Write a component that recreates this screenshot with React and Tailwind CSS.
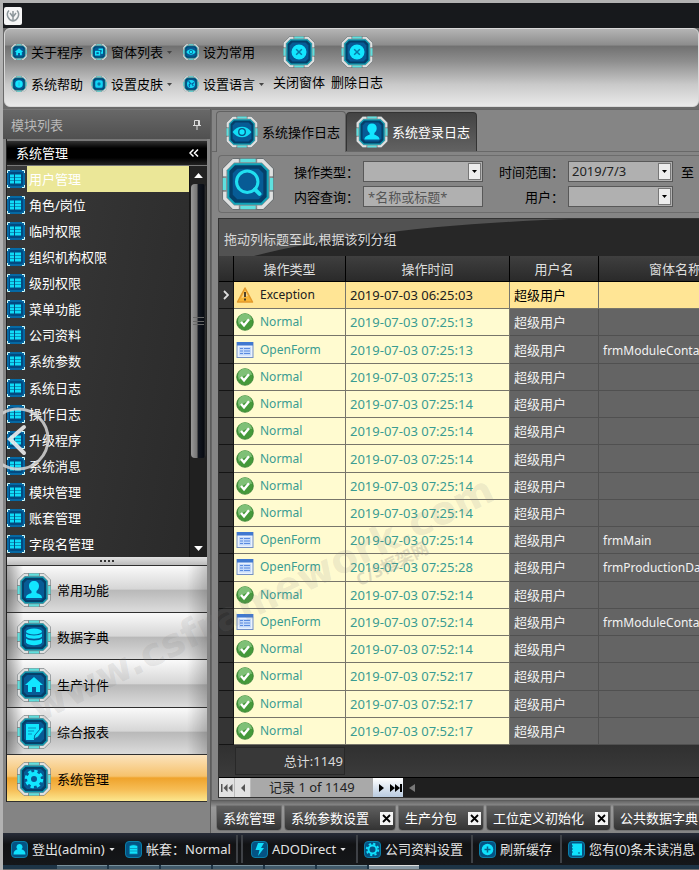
import React from "react";

const glyphs = {
  home: <path d="M17 9 8 17h3v7h4v-5h4v5h4v-7h3z" fill="#12e6ff" />,
  user: (
    <path d="M17 8c3 0 5 2 5 5 0 2-1 4-2.500 5v2c3 1 5.500 2 5.500 5H9c0-3 2.500-4 5.500-5v-2C13 17 12 15 12 13c0-3 2-5 5-5z" fill="#12e6ff" />
  ),
  data: (
    <g fill="#12e6ff">
      <ellipse cx="17" cy="11.500" rx="8" ry="3" />
      <path d="M9 13.500c2 2.500 14 2.500 16 0v3c-2 3-14 3-16 0z" />
      <path d="M9 18.500c2 2.500 14 2.500 16 0v4c-2 3.500-14 3.500-16 0z" />
    </g>
  ),
  report: (
    <g>
      <path d="M9 9h13v6l-5 6v4H9z" fill="#12e6ff" />
      <path d="m25 12-7 8-1 4 4-2 6-8z" fill="#12e6ff" stroke="#0a5f94" strokeWidth=".8" />
      <path d="M11 13h8M11 16h6M11 19h4" stroke="#0a8fc0" />
    </g>
  ),
  gear: (
    <g>
      <circle cx="17" cy="17" r="5" fill="none" stroke="#12e6ff" strokeWidth="4" />
      <circle cx="17" cy="17" r="7.500" fill="none" stroke="#12e6ff" strokeWidth="3.500" strokeDasharray="3.2 2.690" />
    </g>
  ),
  eye: (
    <g>
      <path d="M7 17c5-7.500 15-7.500 20 0-5 7.500-15 7.500-20 0z" fill="#12dcf5" />
      <circle cx="17" cy="17" r="4.200" fill="#075487" />
      <circle cx="17" cy="17" r="2.800" fill="#12e6ff" />
    </g>
  ),
  search: (
    <g fill="none" stroke="#20dff0" strokeLinecap="round">
      <circle cx="16.500" cy="15.500" r="7" strokeWidth="2" />
      <path d="m21.500 20.500 3 3" strokeWidth="2.600" />
    </g>
  ),
  close: (
    <g>
      <circle cx="17" cy="17" r="8" fill="#12e6ff" />
      <path d="m14 14 6 6m0-6-6 6" stroke="#077aa8" strokeWidth="1.600" />
    </g>
  ),
  windows: (
    <g fill="none" stroke="#12e6ff" strokeWidth="3">
      <rect x="10" y="16" width="8" height="7" />
      <path d="M16 11h8v8h-3" />
    </g>
  ),
  info: (
    <g>
      <circle cx="17" cy="17" r="8" fill="#12e6ff" />
      <path d="M17 13v8" stroke="#2cb0d0" strokeWidth="2" />
    </g>
  ),
  skin: (
    <g>
      <rect x="9" y="9" width="16" height="16" rx="4" fill="#12d6f5" />
      <circle cx="17" cy="17" r="3.500" fill="#0877a8" />
    </g>
  ),
  globe: (
    <g>
      <circle cx="17" cy="17" r="8.500" fill="#12d6f5" />
      <path d="m12 11 4 5-3 3 1 4M24 14l-5 3 3 4" stroke="#0560a0" strokeWidth="2.500" fill="none" />
    </g>
  ),
};

function TechIcon({ name, className }) {
  return (
    <svg viewBox="0 0 34 34" className={className} aria-hidden="true">
      <path d="M7 .5h20L33.500 7v20L27 33.500H7L.5 27V7z" fill="#868e91" stroke="#5e6669" strokeWidth=".6" />
      <path d="M11 1.800H7.500L1.800 7.500V12M23 1.800h3.500l5.700 5.700V12M1.800 22v4.500l5.700 5.700H11M32.200 22v4.500l-5.700 5.700H23" stroke="#dfe1e1" strokeWidth="2.200" fill="none" />
      <path d="M12 1.600h10M12 32.400h10M1.600 13v8M32.400 13v8" stroke="#5fe0de" strokeWidth="2.200" />
      <path d="M8 3.500h18L30.500 8v18L26 30.500H8L3.500 26V8z" fill="#0fa3b8" />
      <path d="M8.500 4.800h17l3.700 3.700v17l-3.700 3.700h-17l-3.700-3.700v-17z" fill="#053f69" />
      <path d="M10 7h14l3 3v14l-3 3H10l-3-3V10z" fill="#075b95" />
      {glyphs[name]}
    </svg>
  );
}

function ListIcon() {
  return (
    <svg viewBox="0 0 18 18" className="h-[18px] w-[18px] shrink-0" aria-hidden="true">
      <rect width="18" height="18" fill="#0569a4" />
      <path d="M.5 3V.5H3M15 .5h2.500V3M.5 15v2.500H3M15 17.500h2.500V15" stroke="#d5ffff" fill="none" />
      <rect x="2" y="2" width="14" height="14" rx="2" fill="#034a80" />
      <path d="M3 4.500h4v3H3zm5 0h6v3H8zM3 8h4v2.500H3zm5 0h6v2.500H8zM3 11h4v2.500H3zm5 0h6v2.500H8z" fill="#10dcf8" />
    </svg>
  );
}

const statusGlyphs = {
  user: <path d="M8.500 3a3 3 0 0 1 2 5.300c2.500 1 4 2 4 5.200h-12c0-3.200 1.500-4.200 4-5.200A3 3 0 0 1 8.500 3z" fill="#10e0fc" />,
  db: <path d="M4.500 5c2-1.500 6-1.500 8 0v8h-8zM4.500 7.500h8M4.500 10h8" fill="#10e0fc" stroke="#0783a8" strokeWidth=".7" />,
  bolt: <path d="M7 2h6l-3 5h3l-6 8 1.500-6H4.500z" fill="#10e0fc" />,
  gear: (
    <g fill="none" stroke="#10e0fc">
      <circle cx="8.500" cy="8.500" r="4" strokeWidth="2" />
      <circle cx="8.500" cy="8.500" r="5.700" strokeWidth="2" strokeDasharray="2.200 2.277" />
    </g>
  ),
  plus: (
    <g>
      <circle cx="8.500" cy="8.500" r="5.800" fill="#10e0fc" />
      <path d="M8.500 5.500v6m-3-3h6" stroke="#05628c" strokeWidth="1.500" />
    </g>
  ),
  note: (
    <g>
      <rect x="4" y="2.500" width="10" height="12" fill="#10e0fc" />
      <path d="M3 5h2M3 8h2M3 11h2M10 12h2" stroke="#04507c" />
    </g>
  ),
};

function StatusIcon({ name }) {
  return (
    <svg viewBox="0 0 17 17" className="h-[17px] w-[17px] shrink-0" aria-hidden="true">
      <rect x=".5" y=".5" width="16" height="16" rx="3.500" fill="#045384" stroke="#0a7fa8" />
      {statusGlyphs[name]}
    </svg>
  );
}

function Caret({ className }) {
  return (
    <svg viewBox="0 0 7 4" className={className} aria-hidden="true">
      <path d="M0 0h7L3.500 4z" fill="currentColor" />
    </svg>
  );
}

function RowIcon({ kind }) {
  if (kind === "Exception")
    return (
      <svg viewBox="0 0 18 18" className="h-[18px] w-[18px] shrink-0" aria-hidden="true">
        <path d="M9 2 16.500 16h-15z" fill="#f8b536" stroke="#e39a2c" strokeWidth="1.500" strokeLinejoin="round" />
        <path d="M9 4.500 12 10l-6.500 2z" fill="#fbd789" />
        <path d="M9 6v5m0 1.500v2" stroke="#3d3220" strokeWidth="1.800" />
      </svg>
    );
  if (kind === "OpenForm")
    return (
      <svg viewBox="0 0 18 18" className="h-[18px] w-[18px] shrink-0" aria-hidden="true">
        <rect x="1" y="1.500" width="16" height="15" fill="#e9f1fd" stroke="#7390c4" />
        <rect x="1" y="1" width="16" height="3.500" fill="#3f78d0" />
        <rect x="3" y="6" width="12" height="8.500" fill="#c3d9fa" />
        <path d="M4 7.500h3m1 0h6M4 10h3m1 0h6M4 12.500h3m1 0h6" stroke="#5a8be0" />
      </svg>
    );
  return (
    <svg viewBox="0 0 18 18" className="h-[18px] w-[18px] shrink-0" aria-hidden="true">
      <circle cx="9" cy="9" r="8.300" fill="#45993b" stroke="#347f31" strokeWidth=".8" />
      <path d="M2 8a7 7 0 0 1 14-1C11 6 6 8 3 12z" fill="#7fc077" />
      <path d="m5 9 3 3.300 5-6" fill="none" stroke="#fff" strokeWidth="2.400" />
    </svg>
  );
}

const modules = ["用户管理", "角色/岗位", "临时权限", "组织机构权限", "级别权限", "菜单功能", "公司资料", "系统参数", "系统日志", "操作日志", "升级程序", "系统消息", "模块管理", "账套管理", "字段名管理"];

const groups = [
  ["user", "常用功能"],
  ["data", "数据字典"],
  ["home", "生产计件"],
  ["report", "综合报表"],
  ["gear", "系统管理"],
];

const rows = [
  ["Exception", "2019-07-03 06:25:03", ""],
  ["Normal", "2019-07-03 07:25:13", ""],
  ["OpenForm", "2019-07-03 07:25:13", "frmModuleContainer"],
  ["Normal", "2019-07-03 07:25:13", ""],
  ["Normal", "2019-07-03 07:25:14", ""],
  ["Normal", "2019-07-03 07:25:14", ""],
  ["Normal", "2019-07-03 07:25:14", ""],
  ["Normal", "2019-07-03 07:25:14", ""],
  ["Normal", "2019-07-03 07:25:14", ""],
  ["OpenForm", "2019-07-03 07:25:14", "frmMain"],
  ["OpenForm", "2019-07-03 07:25:28", "frmProductionData"],
  ["Normal", "2019-07-03 07:52:14", ""],
  ["OpenForm", "2019-07-03 07:52:14", "frmModuleContainer"],
  ["Normal", "2019-07-03 07:52:14", ""],
  ["Normal", "2019-07-03 07:52:17", ""],
  ["Normal", "2019-07-03 07:52:17", ""],
  ["Normal", "2019-07-03 07:52:17", ""],
];

function RibbonItem({ icon, text, menu }) {
  return (
    <button className="flex h-8 items-center gap-1 whitespace-nowrap">
      <TechIcon name={icon} className="h-4 w-4 shrink-0" />
      {text}
      {menu && <Caret className="h-[3px] w-[5px] text-[#444]" />}
    </button>
  );
}

function Ribbon() {
  return (
    <header className="ml-px flex h-[79px] overflow-hidden rounded-md border border-[#d8d8d8] bg-[linear-gradient(#b4b4b4_0%,#8c8c8c_21%,#707070_22%,#8e8e8e_42%,#c9c9c9_72%,#eaeaea_100%)] pl-1.5 pt-[7px] text-black">
      <div className="flex w-20 shrink-0 flex-col items-start">
        <RibbonItem icon="home" text="关于程序" />
        <RibbonItem icon="info" text="系统帮助" />
      </div>
      <div className="flex w-[92px] shrink-0 flex-col items-start">
        <RibbonItem icon="windows" text="窗体列表" menu />
        <RibbonItem icon="skin" text="设置皮肤" menu />
      </div>
      <div className="flex w-[87px] shrink-0 flex-col items-start">
        <RibbonItem icon="eye" text="设为常用" />
        <RibbonItem icon="globe" text="设置语言" menu />
      </div>
      <div className="flex shrink-0 items-start">
        {["关闭窗体", "删除日志"].map((t) => (
          <button key={t} className="flex w-[58px] flex-col items-center gap-1 whitespace-nowrap">
            <TechIcon name="close" className="h-8 w-8" />
            <span className="leading-5">{t}</span>
          </button>
        ))}
      </div>
    </header>
  );
}

function Sidebar() {
  return (
    <aside className="flex w-[208px] shrink-0 flex-col border-r border-[#5c5c5c] bg-[#848484]">
      <div className="flex h-[30px] items-center justify-between border-t border-[#777] bg-[linear-gradient(#686868,#505050)] px-2 text-[#b9b9b9]">
        <span>模块列表</span>
        <svg viewBox="0 0 10 12" className="h-3 w-2.5" fill="none" stroke="#dcdcdc" aria-label="固定">
          <path d="M2.500 1.500h5v5h-5zM6.500 1.500v5M1 6.500h8M5 7v4" />
        </svg>
      </div>
      <div className="mx-[3px] flex flex-col border-l border-[#222]">
        <div className="flex h-[27px] items-center justify-between border-b border-t-2 border-[#777] bg-[linear-gradient(#333,#000_30%,#000_70%,#222)] pl-[9px] pr-2 text-white">
          <span>系统管理</span>
          <svg viewBox="0 0 10 8" className="h-2 w-2.5" fill="none" stroke="#fff" strokeWidth="1.500" aria-label="折叠">
            <path d="M4.500.5 1 4l3.500 3.500M9 .5 5.500 4 9 7.500" />
          </svg>
        </div>
        <div className="flex h-[391px] bg-[#2d2d2d]">
          <ul className="flex min-w-0 flex-1 flex-col overflow-hidden bg-[linear-gradient(100deg,#393939,#2a2a2a)]">
            {modules.map((m, i) => (
              <li key={m} className="flex flex-1 items-center gap-0.5 text-white">
                <ListIcon />
                <a href="#" className={i === 0 ? "flex h-full flex-1 items-center bg-[#ebe798] pl-0.5" : "pl-0.5"}>{m}</a>
              </li>
            ))}
          </ul>
          <div className="flex w-[18px] flex-col items-center border-l border-[#151515] bg-[#202020]">
            <button aria-label="向上" className="flex h-[18px] w-full items-center justify-center bg-[#222] text-white">
              <Caret className="h-[5px] w-[9px] rotate-180" />
            </button>
            <div className="flex h-[274px] w-[15px] items-center rounded-sm bg-[linear-gradient(90deg,#999,#777_38%,#555_42%,#111620_50%,#080b12_85%,#333)]">
              <span className="flex h-2 w-full flex-col justify-between px-0.5"><i className="h-px bg-[#666]" /><i className="h-px bg-[#666]" /><i className="h-px bg-[#666]" /></span>
            </div>
            <button aria-label="向下" className="mt-auto flex h-[18px] w-full items-center justify-center text-white">
              <Caret className="h-[5px] w-[9px]" />
            </button>
          </div>
        </div>
        <div className="flex h-2 items-center justify-center gap-0.5 bg-[linear-gradient(#e2e2e2,#bcbcbc)]">
          <i className="h-0.5 w-0.5 bg-[#333]" /><i className="h-0.5 w-0.5 bg-[#333]" /><i className="h-0.5 w-0.5 bg-[#333]" /><i className="h-0.5 w-0.5 bg-[#333]" />
        </div>
        <nav className="flex h-[237px] flex-col">
          {groups.map(([icon, text], i) => (
            <button
              key={text}
              className={
                i === 4
                  ? "flex flex-1 items-center gap-1.5 border-y border-[#303030] bg-[linear-gradient(#fbe3bd,#f6c26c_46%,#efa32c_50%,#f6bd55_75%,#fce78f)] pl-2.5 pt-0.5 text-black"
                  : "flex flex-1 items-center gap-1.5 border-t border-[#303030] bg-[linear-gradient(90deg,#0005,transparent_8%,transparent_90%,#0003),linear-gradient(#fafafa,#d6d6d6_50%,#b9b9b9_53%,#dcdcdc)] pl-2.5 pt-0.5 text-black"
              }
            >
              <TechIcon name={icon} className="h-[34px] w-[34px]" />
              {text}
            </button>
          ))}
        </nav>
      </div>
    </aside>
  );
}

function Combo({ id, value }) {
  return (
    <div className="relative h-[21px]">
      <select id={id} className="block h-full w-full appearance-none border border-[#585858] bg-[#b0b0b0] pl-[3px] leading-[19px] text-[#222]">
        <option>{value}</option>
      </select>
      <span className="pointer-events-none absolute inset-y-0.5 right-0.5 flex w-[13px] items-center justify-center border border-[#777] bg-[#ededed] text-black">
        <Caret className="h-[3px] w-[5px]" />
      </span>
    </div>
  );
}

function Filters() {
  return (
    <form className="ml-1.5 mt-[3px] flex h-[58px] items-center overflow-hidden rounded-l-sm border border-r-0 border-[#6c6c6c] pl-[3px]">
      <button type="button" aria-label="查询" className="mr-5 shrink-0">
        <TechIcon name="search" className="h-[52px] w-[52px]" />
      </button>
      <div className="grid shrink-0 grid-cols-[65px_120px_77px_105px_auto] items-center gap-1 whitespace-nowrap text-black">
        <label htmlFor="type">操作类型：</label>
        <Combo id="type" value="" />
        <label htmlFor="from" className="text-right">时间范围：</label>
        <Combo id="from" value="2019/7/3" />
        <span className="ml-1">至</span>
        <label htmlFor="content">内容查询：</label>
        <input id="content" placeholder="*名称或标题*" className="h-[21px] w-full border border-[#585858] bg-[#b0b0b0] px-1 placeholder:text-[#555]" />
        <label htmlFor="user" className="text-right">用户：</label>
        <Combo id="user" value="" />
      </div>
    </form>
  );
}

function LogTable() {
  const th = "border-b border-r border-black bg-[linear-gradient(#3f3f3f,#2a2a2a)] p-0 font-normal text-[#dedede]";
  return (
    <table className="h-[489px] w-[533px] table-fixed border-separate border-spacing-0">
      <colgroup>
        <col className="w-[15px]" />
        <col className="w-[112px]" />
        <col className="w-[164px]" />
        <col className="w-[89px]" />
        <col className="w-[153px]" />
      </colgroup>
      <thead>
        <tr className="h-[26px]">
          <th className={th} aria-label="行" />
          <th className={th}>操作类型</th>
          <th className={th}>操作时间</th>
          <th className={th}>用户名</th>
          <th className={th}>窗体名称</th>
        </tr>
      </thead>
      <tbody>
        {rows.map(([kind, time, form], i) => {
          const light = i === 0 ? "border-b border-r border-[#77756a] bg-[#ffe595] p-0 text-[#202020]" : "border-b border-r border-[#77756a] bg-[#fffbd0] p-0 text-[#3a9c92]";
          const dark = i === 0 ? "border-b border-r border-[#77756a] bg-[#ffe595] p-0 pl-1 text-black" : "border-b border-r border-[#505050] bg-[#646464] p-0 pl-1 text-[#f2f2f2]";
          return (
            <tr key={i}>
              <td className="border-b border-r border-[#141414] bg-[#343434] p-0">
                {i === 0 && (
                  <svg viewBox="0 0 6 10" className="mx-auto h-2.5 w-1.5" fill="none" stroke="#ddd" strokeWidth="1.800" aria-label="当前行">
                    <path d="m1 1 4 4-4 4" />
                  </svg>
                )}
              </td>
              <td className={light}>
                <div className="flex items-center gap-[6px] pl-0.5 text-xs"><RowIcon kind={kind} />{kind}</div>
              </td>
              <td className={light}><span className="pl-1">{time}</span></td>
              <td className={dark}>超级用户</td>
              <td className={dark}><span className="text-xs">{form}</span></td>
            </tr>
          );
        })}
      </tbody>
    </table>
  );
}

function NavButton({ label, d, on }) {
  return (
    <button aria-label={label} className={on ? "flex w-[15px] items-center justify-center bg-[linear-gradient(#fff,#b9cbe0)]" : "flex w-4 items-center justify-center border-r border-[#bbb] bg-[#e2e2e2]"}>
      <svg viewBox="0 0 12 8" className="h-2 w-3" fill={on ? "#000" : "#555"} aria-hidden="true"><path d={d} /></svg>
    </button>
  );
}

const docs = [["系统管理", false], ["系统参数设置", true], ["生产分包", true], ["工位定义初始化", true], ["公共数据字典", true]];

function Main() {
  return (
    <main className="flex min-w-0 flex-1 flex-col overflow-hidden bg-[#858585]">
      <div className="border-l border-t border-[#666] pb-0.5">
        <div className="flex h-[42px] items-end border-b border-[#686868] pl-1" role="tablist">
          <button role="tab" aria-selected="true" className="-mb-px flex h-[41px] w-[130px] items-center gap-1 whitespace-nowrap rounded-t border border-b-0 border-[#626262] bg-[#868686] pl-[9px] text-black">
            <TechIcon name="eye" className="h-8 w-8 shrink-0" />
            系统操作日志
          </button>
          <button role="tab" aria-selected="false" className="flex h-[39px] w-[131px] items-center gap-1 whitespace-nowrap rounded-t border border-b-0 border-[#333] bg-[linear-gradient(#434343,#626262)] pl-[9px] text-white">
            <TechIcon name="user" className="h-8 w-8 shrink-0" />
            系统登录日志
          </button>
        </div>
        <Filters />
        <section className="ml-1.5 mt-[5px] overflow-hidden border border-r-0 border-[#333] bg-[#272727]">
          <div className="relative h-[37px]">
            <svg viewBox="0 0 480 38" preserveAspectRatio="none" className="absolute inset-0 h-full w-full" aria-hidden="true">
              <path d="M0 0h350C220 5 110 18 35 38H0z" fill="#525252" />
            </svg>
            <p className="relative pl-[5px] leading-10 text-[#d9d9d9]">拖动列标题至此,根据该列分组</p>
          </div>
          <LogTable />
          <div className="flex h-8 bg-[linear-gradient(#303030,#3b3b3b)]">
            <div className="ml-4 mt-0.5 flex h-7 w-[110px] items-center justify-end border border-[#282828] bg-[#383838] pr-px text-[#dadada]">总计:1149</div>
          </div>
          <div className="flex h-5 border-t border-black bg-[#1f1f1f]">
            <NavButton label="第一条" d="M0 0h1.500v8H0zM6.500 0v8l-4-4zM11.500 0v8l-4-4z" />
            <NavButton label="上一条" d="M8 0v8L4 4z" />
            <span className="w-[122px] bg-[#a9a9a9] pl-[18px] leading-[19px] text-[#222]">记录 1 of 1149</span>
            <NavButton label="下一条" d="M4 0v8l5-4z" on />
            <NavButton label="最后一条" d="M0 0v8l5-4zM5 0v8l5-4zM10 0h2v8h-2z" on />
            <svg viewBox="0 0 6 8" className="ml-1.5 mt-1.5 h-2 w-1.5" aria-hidden="true"><path d="M6 0v8L0 4z" fill="#777" /></svg>
          </div>
        </section>
      </div>
      <div className="flex h-[33px] gap-0.5 border-t border-[#5c5c5c] bg-[linear-gradient(#666,#999_20%,#858585)] pl-[5px] pt-1">
        {docs.map(([t, closable]) => (
          <div key={t} className="flex h-[26px] shrink-0 items-center gap-[11px] whitespace-nowrap rounded-b border border-[#747474] bg-[linear-gradient(#606060,#333)] px-[6px] text-white">
            <button>{t}</button>
            {closable && (
              <button aria-label={"关闭" + t} className="-mr-1 flex h-[13px] w-[13px] items-center justify-center bg-[#f3f3f3]">
                <svg viewBox="0 0 9 9" className="h-[9px] w-[9px]" aria-hidden="true"><path d="m1 1 7 7m0-7L1 8" stroke="#000" strokeWidth="1.800" /></svg>
              </button>
            )}
          </div>
        ))}
      </div>
    </main>
  );
}

function StatusBar() {
  const item = "flex shrink-0 items-center gap-1";
  const sep = <i className="h-7 w-0.5 shrink-0 bg-[#3e4146]" />;
  return (
    <footer className="flex h-8 items-center overflow-hidden whitespace-nowrap bg-[linear-gradient(#272c38,#111214_35%,#15171a)] pl-2 text-[#e3e3e3]">
      <button className={item + " w-[114px]"}><StatusIcon name="user" />登出(admin)<Caret className="h-[3px] w-1.5" /></button>
      <span className={item + " w-[111px]"}><StatusIcon name="db" />帐套：Normal</span>
      {sep}
      <i className="ml-[3px] h-7 w-0.5 shrink-0 bg-[#3e4146]" />
      <button className={item + " ml-2 w-[105px]"}><StatusIcon name="bolt" />ADODirect<Caret className="h-[3px] w-1.5" /></button>
      {sep}
      <button className={item + " ml-1.5 w-[107px]"}><StatusIcon name="gear" />公司资料设置</button>
      {sep}
      <button className={item + " ml-1.5 w-[81px]"}><StatusIcon name="plus" />刷新缓存</button>
      {sep}
      <button className={item + " ml-1.5"}><StatusIcon name="note" />您有(0)条未读消息</button>
    </footer>
  );
}

export default function App() {
  return (
    <div className="relative min-h-screen overflow-hidden border-l-[3px] border-t-[3px] border-[#b2b2b2] bg-[#6a6a6a] font-['Noto_Sans','Noto_Sans_CJK_SC',sans-serif] text-[13px] leading-5">
      <div className="flex h-[25px] items-center bg-[#17191c] pl-px">
        <svg viewBox="0 0 18 18" className="h-[18px] w-[18px]" aria-label="应用">
          <rect width="18" height="18" rx="2" fill="#f6f6f6" />
          <path d="M9 4v9M6 6l3 4 3-4M5 3.500C1.500 7 4 13 9 14c5-1 7.500-7 4-10.500" fill="none" stroke="#8d979b" strokeWidth="1.500" />
        </svg>
      </div>
      <Ribbon />
      <div className="flex pt-0.5">
        <Sidebar />
        <Main />
      </div>
      <StatusBar />
      <div className="flex h-1 gap-0.5 overflow-hidden bg-[#1d3446] pl-[54px]">
        {[0, 1, 2, 3, 4, 5, 6].map((n) => (
          <i key={n} className={n === 6 ? "h-1 w-[50px] border-t border-[#ddd] bg-[#8797a2]" : "h-1 w-[50px] border-t border-[#78909c] bg-[#40596a]"} />
        ))}
      </div>
      <svg viewBox="0 0 52 64" className="pointer-events-none absolute left-[-3px] top-[404px] h-16 w-[52px]" fill="none" aria-hidden="true">
        <circle cx="18" cy="32" r="30" stroke="#d6d6d6" strokeWidth="3" opacity=".85" />
        <path d="M24 20 10 32l14 14" stroke="#ececec" strokeWidth="4" opacity=".9" strokeLinecap="round" />
      </svg>
      <div className="pointer-events-none absolute left-[30px] top-[688px] origin-left -rotate-[26deg] whitespace-nowrap font-['DejaVu_Sans'] text-[39px] font-bold leading-10 text-[#808080]/15">www.csframework.com</div>
      <div className="pointer-events-none absolute left-[354px] top-[568px] origin-left -rotate-[26deg] whitespace-nowrap text-[17px] font-bold text-[#808080]/25">C/S框架网</div>
    </div>
  );
}
